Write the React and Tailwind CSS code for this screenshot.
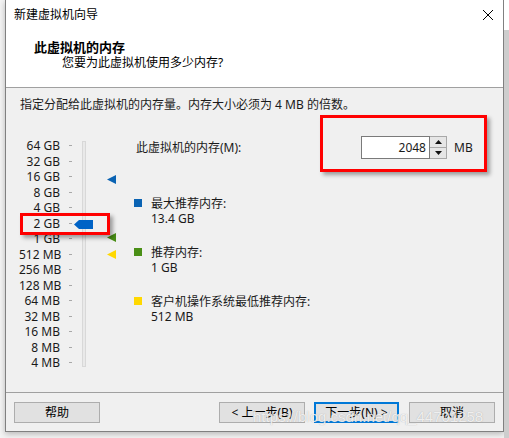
import React from "react";

const FONT = { fontFamily: "'Noto Sans', 'Noto Sans CJK SC', sans-serif" };

const SIZES = [
  "64 GB", "32 GB", "16 GB", "8 GB", "4 GB", "2 GB", "1 GB",
  "512 MB", "256 MB", "128 MB", "64 MB", "32 MB", "16 MB", "8 MB", "4 MB",
];

const LEGEND = [
  { color: "bg-[#0a63b3]", label: "最大推荐内存:", value: "13.4 GB" },
  { color: "bg-[#4a8f16]", label: "推荐内存:", value: "1 GB" },
  { color: "bg-[#ffd800]", label: "客户机操作系统最低推荐内存:", value: "512 MB" },
];

const Marker = ({ color }) => (
  <svg width="9" height="9" viewBox="0 0 9 9">
    <polygon points="9,0 9,9 0,4.5" fill={color} />
  </svg>
);

function Slider() {
  return (
    <div className="relative w-[100px] ml-[13px] pt-[2px]">
      {SIZES.map((s) => (
        <div key={s} className="flex items-center h-[15.5px]">
          <span className="w-[41px] text-right text-[12px] leading-[15.5px] text-[#1a1a1a] whitespace-nowrap">{s}</span>
          <span className="ml-[9px] w-[3px] h-px bg-[#a8a8a8]" />
        </div>
      ))}

      {/* track */}
      <div className="absolute left-[63px] top-[5px] w-[4px] h-[226px] bg-[#e9e9e9] border border-[#d8d8d8]" />

      {/* thumb */}
      <svg className="absolute left-[55px] top-[84px]" width="19" height="9" viewBox="0 0 19 9">
        <polygon points="5,0 19,0 19,9 5,9 0,4.5" fill="#0063c6" />
      </svg>

      {/* recommended markers */}
      <div className="absolute left-[88px] top-[39px]"><Marker color="#0a63b3" /></div>
      <div className="absolute left-[88px] top-[97px]"><Marker color="#4a8f16" /></div>
      <div className="absolute left-[88px] top-[114px]"><Marker color="#ffd800" /></div>

      {/* annotation */}
      <div className="absolute left-[1px] top-[77px] w-[90px] h-[22px] border-[3px] border-[#ff0000] shadow-[3px_3px_4px_rgba(0,0,0,0.35)]" />
    </div>
  );
}

function Spinbox() {
  return (
    <div className="flex w-[86px] h-[23px]">
      <div className="w-[69px] h-full bg-white border border-[#7a7a7a] flex items-center justify-end pr-[3px] text-[12px]">2048</div>
      <div className="w-[17px] h-full flex flex-col border border-l-0 border-[#a8a8a8] bg-[#f0f0f0]">
        <div className="flex-1 flex items-center justify-center border-b border-[#a8a8a8] bg-[#e6e6e6]">
          <svg width="7" height="4" viewBox="0 0 7 4"><polygon points="0,4 7,4 3.5,0" fill="#111" /></svg>
        </div>
        <div className="flex-1 flex items-center justify-center bg-[#e6e6e6]">
          <svg width="7" height="4" viewBox="0 0 7 4"><polygon points="0,0 7,0 3.5,4" fill="#111" /></svg>
        </div>
      </div>
    </div>
  );
}

function Btn({ children, primary, className = "" }) {
  return (
    <button
      className={`h-[21px] flex items-center justify-center text-[12px] text-black bg-[#e1e1e1] ${
        primary ? "border-2 border-[#0078d7]" : "border border-[#adadad]"
      } ${className}`}
    >
      {children}
    </button>
  );
}

export default function App() {
  return (
    <div className="w-[509px] h-[438px] flex bg-[#f4f4f4] overflow-hidden" style={FONT}>
      <div className="ml-[5px] w-[499px] h-[432px] flex flex-col bg-white border-x border-b border-[#808080] shadow-[0_2px_6px_rgba(0,0,0,0.25)] text-[#1a1a1a]">

        {/* title bar */}
        <div className="h-[30px] flex items-center justify-between pl-[8px] pr-[10px]">
          <span className="text-[12px] text-black">新建虚拟机向导</span>
          <svg width="10" height="10" viewBox="0 0 10 10" stroke="#000" strokeWidth="1">
            <path d="M0 0L10 10M10 0L0 10" />
          </svg>
        </div>

        {/* header */}
        <div className="h-[57px] pt-[9px]">
          <p className="pl-[28px] text-[13px] font-bold leading-[16px] text-black">此虚拟机的内存</p>
          <p className="pl-[56px] text-[12px] leading-[16px] text-black">您要为此虚拟机使用多少内存?</p>
        </div>
        <div className="h-px bg-[#a0a0a0]" />

        {/* content */}
        <div className="relative h-[304px] bg-[#f0f0f0]">
          <p className="pt-[9px] pl-[14px] text-[12px] leading-[16px]">
            指定分配给此虚拟机的内存量。内存大小必须为 4 MB 的倍数。
          </p>

          <div className="flex mt-[23px]">
            <Slider />

            <div className="ml-[15px] w-[340px]">
              <div className="flex items-center h-[23px]">
                <span className="flex-1 pl-[2px] text-[12px]">此虚拟机的内存(M):</span>
                <Spinbox />
                <span className="ml-[7px] w-[20px] text-[12px]">MB</span>
              </div>

              <div className="mt-[37px] flex flex-col gap-[19px]">
                {LEGEND.map((l) => (
                  <div key={l.label} className="flex">
                    <span className={`mt-[3px] w-2 h-2 ${l.color}`} />
                    <div className="ml-[9px] text-[12px] leading-[15px]">
                      <p>{l.label}</p>
                      <p>{l.value}</p>
                    </div>
                  </div>
                ))}
              </div>
            </div>
          </div>

          {/* annotation */}
          <div className="absolute left-[314px] top-[27px] w-[167px] h-[57px] border-[3px] border-[#ff0000] shadow-[3px_3px_4px_rgba(0,0,0,0.35)]" />
        </div>

        {/* footer */}
        <div className="h-px bg-[#a0a0a0]" />
        <div className="relative flex-1 bg-[#f0f0f0] flex items-start pt-[9px] pl-[8px] pr-[8px]">
          <Btn className="w-[86px]">帮助</Btn>
          <div className="flex-1" />
          <Btn className="w-[86px]">&lt; 上一步(B)</Btn>
          <Btn primary className="w-[85px] ml-[9px]">下一步(N) &gt;</Btn>
          <Btn className="w-[86px] ml-[10px]">取消</Btn>

          <span
            className="absolute left-[247px] top-[15px] text-[15px] leading-[18px] text-white/80 whitespace-nowrap [text-shadow:0_0_1px_rgba(120,120,120,0.6)]"
            style={{ fontFamily: "'Liberation Sans', sans-serif" }}
          >
            https://blog.csdn.net/qq_44701258
          </span>
        </div>
      </div>

      <div className="flex-1 flex flex-col">
        <div className="h-[30px] bg-white" />
        <div className="flex-1 bg-[#cdcdcd]" />
      </div>
    </div>
  );
}
